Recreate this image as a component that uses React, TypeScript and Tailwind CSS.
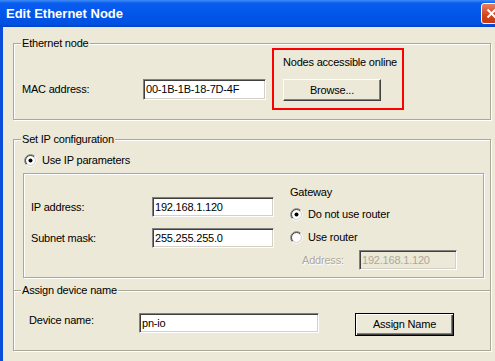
const body = 'bg-[#ECE9D8]'

function Group({ label, className = '', children }: { label?: string; className?: string; children?: React.ReactNode }) {
  return (
    <div className={`relative border border-[#ACA899] shadow-[inset_1px_1px_0_#fff,1px_1px_0_#fff] ${className}`}>
      {label && (
        <span className="absolute -top-[7px] left-[7px] bg-[#ECE9D8] px-[1px] leading-[13px] whitespace-nowrap">{label}</span>
      )}
      {children}
    </div>
  )
}

function Field({ value, className = '', disabled = false }: { value: string; className?: string; disabled?: boolean }) {
  return (
    <div
      className={`flex items-center pl-[2px] border border-t-[#808080] border-l-[#808080] border-r-white border-b-white shadow-[inset_1px_1px_0_#404040,inset_-1px_-1px_0_#D4D0C8] leading-[13px] whitespace-nowrap ${
        disabled ? 'bg-[#ECE9D8] text-[#ACA899]' : 'bg-white'
      } ${className}`}
    >
      {value}
    </div>
  )
}

function Radio({ checked }: { checked?: boolean }) {
  return (
    <svg width="13" height="13" viewBox="0 0 13 13" className="shrink-0">
      <circle cx="6.5" cy="6.5" r="4.6" fill="#fff" />
      <path d="M2.26 10.74 A6 6 0 0 1 10.74 2.26" fill="none" stroke="#808080" />
      <path d="M10.74 2.26 A6 6 0 0 1 2.26 10.74" fill="none" stroke="#fff" />
      <path d="M2.96 10.04 A5 5 0 0 1 10.04 2.96" fill="none" stroke="#404040" />
      <path d="M10.04 2.96 A5 5 0 0 1 2.96 10.04" fill="none" stroke="#D4D0C8" />
      {checked && <circle cx="6.5" cy="6.5" r="2" fill="#000" />}
    </svg>
  )
}

function RadioRow({ label, checked }: { label: string; checked?: boolean }) {
  return (
    <div className="flex items-center gap-[5px] h-[13px] leading-[13px] whitespace-nowrap">
      <Radio checked={checked} />
      <span>{label}</span>
    </div>
  )
}

export default function App() {
  return (
    <div className="w-[495px] h-[361px] overflow-hidden bg-white font-['Liberation_Sans',Arial,sans-serif] text-[11px] tracking-[-0.2px] text-black">
      <div className="w-[507px] h-full flex flex-col">
        {/* title bar */}
        <div className="h-[27px] shrink-0 flex items-start justify-between bg-[linear-gradient(to_bottom,#3D8CF5_0%,#0A5CF0_12%,#0055E8_60%,#0050E0_90%,#0042C4_100%)]">
          <span className="pl-[6px] pt-[6px] text-[13px] font-bold leading-[16px] tracking-normal text-white">Edit Ethernet Node</span>
          <div className="mt-[3px] mr-[5px] w-[21px] h-[21px] rounded-[3px] border border-white flex items-center justify-center bg-[linear-gradient(to_bottom,#E97E5E,#D4441C_60%,#C23A14)]">
            <svg width="11" height="11" viewBox="0 0 11 11">
              <path d="M1.5 1.5 L9.5 9.5 M9.5 1.5 L1.5 9.5" stroke="#fff" strokeWidth="2" />
            </svg>
          </div>
        </div>

        <div className={`flex-1 border-l-[3px] border-r-[3px] border-[#0B4DDB] ${body}`}>
          {/* Ethernet node */}
          <Group label="Ethernet node" className="ml-[10px] mt-[16px] w-[478px] h-[77px]">
            <div className="flex items-start pt-[4px] pl-[8px]">
              <div className="flex items-center mt-[31px]">
                <span className="w-[121px] leading-[13px]">MAC address:</span>
                <Field value="00-1B-1B-18-7D-4F" className="w-[123px] h-[21px]" />
              </div>
              <div className="ml-[6px] w-[132px] h-[62px] border-2 border-[#FF0000] pl-[9px] pt-[6px]">
                <div className="leading-[13px] whitespace-nowrap">Nodes accessible online</div>
                <button className="mt-[10px] w-[98px] h-[22px] flex items-center justify-center bg-[#ECE9D8] border border-t-white border-l-white border-r-[#404040] border-b-[#404040] shadow-[inset_-1px_-1px_0_#808080]">
                  Browse...
                </button>
              </div>
            </div>
          </Group>

          {/* Set IP configuration + Assign device name */}
          <Group label="Set IP configuration" className="ml-[10px] mt-[19px] w-[478px] h-[212px]">
            <div className="pl-[10px] pt-[14px]">
              <RadioRow label="Use IP parameters" checked />
            </div>
            <Group className="ml-[9px] mt-[6px] w-[461px] h-[105px]">
              <div className="flex items-start pl-[7px]">
                <div className="pt-[23px] flex flex-col gap-[11px]">
                  <div className="flex items-center">
                    <span className="w-[121px] leading-[13px]">IP address:</span>
                    <Field value="192.168.1.120" className="w-[122px] h-[20px]" />
                  </div>
                  <div className="flex items-center">
                    <span className="w-[121px] leading-[13px]">Subnet mask:</span>
                    <Field value="255.255.255.0" className="w-[122px] h-[20px]" />
                  </div>
                </div>
                <div className="ml-[16px] pt-[12px] flex flex-col">
                  <span className="leading-[13px]">Gateway</span>
                  <div className="mt-[9px]">
                    <RadioRow label="Do not use router" checked />
                  </div>
                  <div className="mt-[10px]">
                    <RadioRow label="Use router" />
                  </div>
                  <div className="mt-[6px] pl-[12px] flex items-center">
                    <span className="w-[57px] leading-[13px] text-[#ACA899] [text-shadow:1px_1px_0_#fff]">Address:</span>
                    <Field value="192.168.1.120" disabled className="w-[98px] h-[20px]" />
                  </div>
                </div>
              </div>
            </Group>

            {/* Assign device name divider */}
            <div className="relative mt-[12px] border-t border-[#ACA899] shadow-[0_1px_0_#fff]">
              <span className="absolute -top-[7px] left-[7px] bg-[#ECE9D8] px-[1px] leading-[13px] whitespace-nowrap">
                Assign device name
              </span>
            </div>
            <div className="mt-[22px] pl-[15px] flex items-start">
              <span className="mt-[1px] w-[110px] leading-[13px]">Device name:</span>
              <Field value="pn-io" className="w-[180px] h-[20px]" />
              <button className="ml-[36px] w-[99px] h-[23px] flex items-center justify-center bg-[#ECE9D8] border border-black shadow-[inset_1px_1px_0_#fff,inset_-1px_-1px_0_#404040,inset_-2px_-2px_0_#808080]">
                Assign Name
              </button>
            </div>
          </Group>
        </div>
      </div>
    </div>
  )
}
